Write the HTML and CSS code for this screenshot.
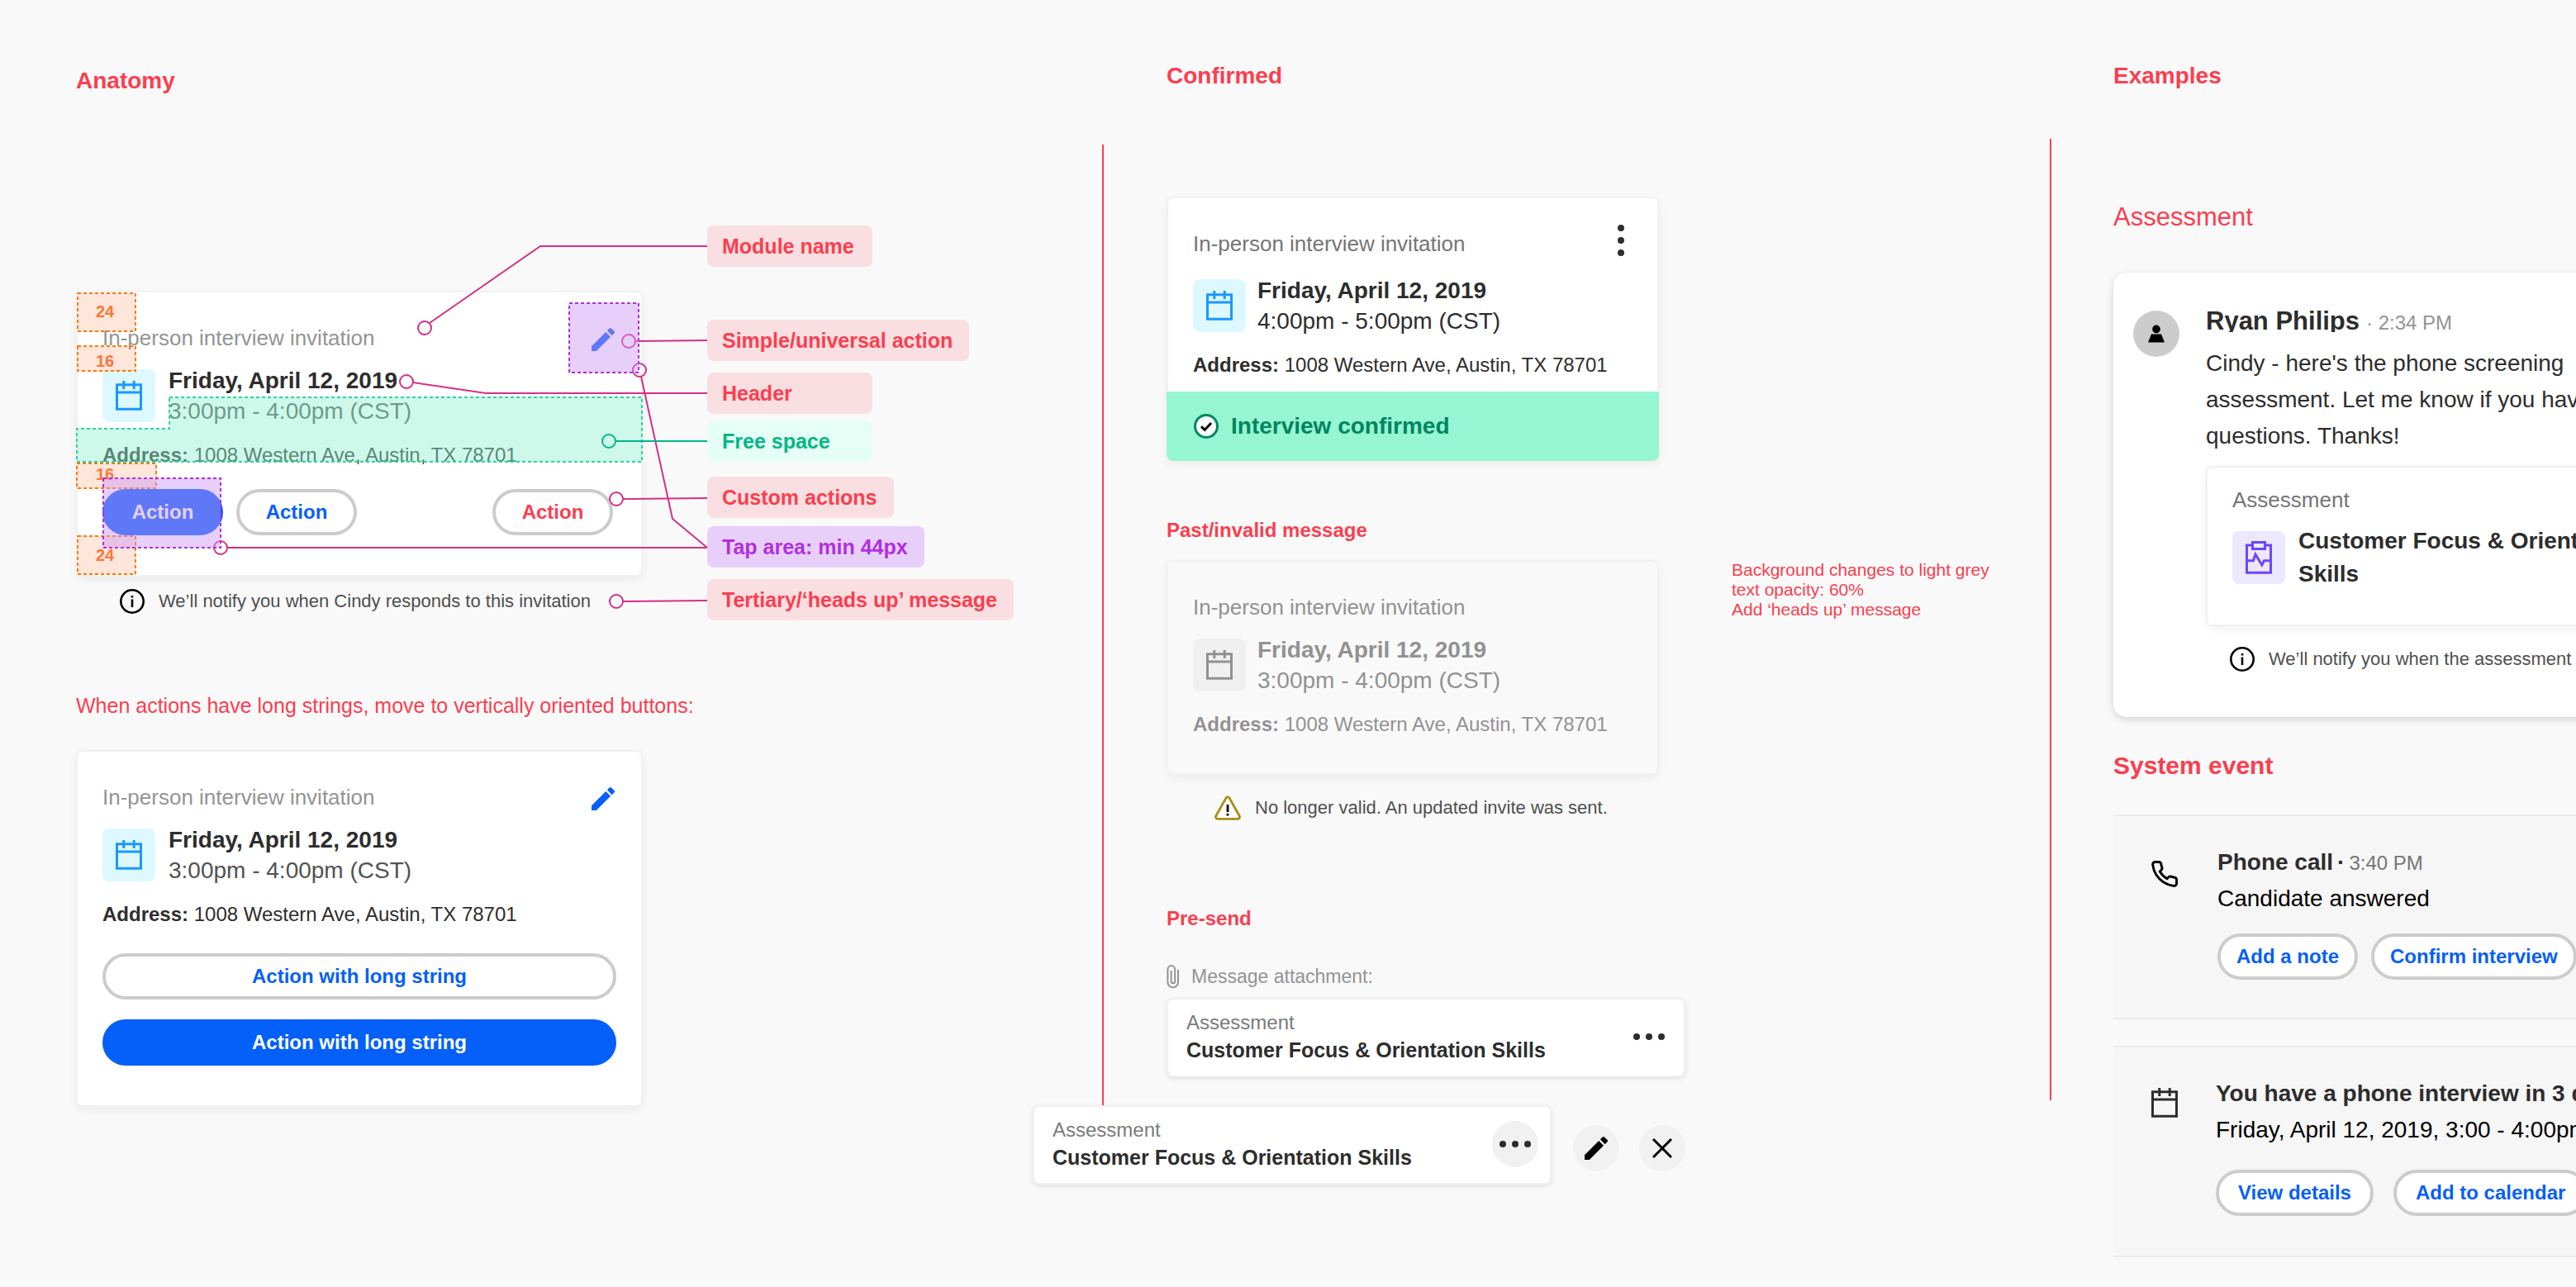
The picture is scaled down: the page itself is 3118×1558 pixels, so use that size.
FILE: index.html
```html
<!DOCTYPE html>
<html lang="en">
<head>
<meta charset="utf-8">
<title>Interview message cards</title>
<link rel="stylesheet" href="styles.css">
</head>
<body>
<svg class="sprite" aria-hidden="true">
  <symbol id="calendar" viewBox="0 0 32 36">
    <path d="M1.5 4.8h29v29.5h-29zM1.5 14h29M9.8 0v10M22.2 0v10" fill="none" stroke="currentColor" stroke-width="3"/>
  </symbol>
  <symbol id="pencil" viewBox="3 3 18 18">
    <path d="M3 17.25V21h3.75L17.81 9.94l-3.75-3.75L3 17.25zM20.71 7.04c.39-.39.39-1.02 0-1.41l-2.34-2.34c-.39-.39-1.02-.39-1.41 0l-1.83 1.83 3.75 3.75 1.83-1.83z" fill="currentColor"/>
  </symbol>
  <symbol id="info" viewBox="0 0 30 30">
    <circle cx="15" cy="15" r="13.7" fill="none" stroke="#000" stroke-width="2.6"/>
    <path d="M15 12.5V22M15 8v2.6" stroke="#000" stroke-width="2.6"/>
  </symbol>
  <symbol id="dots" viewBox="0 0 38 8">
    <circle cx="4" cy="4" r="4"/><circle cx="19" cy="4" r="4"/><circle cx="34" cy="4" r="4"/>
  </symbol>
</svg>
<main class="board">
  <section class="column anatomy">
    <h1 class="heading">Anatomy</h1>
    <div class="stage">
      <div class="stage-main">
        <article class="card">
          <header class="card-head">
            <h2 class="card-name">In-person interview invitation</h2>
            <button class="icon-button" aria-label="Edit"><svg width="28" height="28"><use href="#pencil"/></svg></button>
          </header>
          <div class="event-row">
            <span class="tile"><svg width="32" height="36"><use href="#calendar"/></svg></span>
            <div><p class="date">Friday, April 12, 2019</p><p class="time">3:00pm - 4:00pm (CST)</p></div>
          </div>
          <p class="address"><b>Address:</b> 1008 Western Ave, Austin, TX 78701</p>
          <div class="actions">
            <button class="pill primary">Action</button>
            <button class="pill">Action</button>
            <button class="pill danger">Action</button>
          </div>
        </article>
        <p class="notice"><svg width="30" height="30"><use href="#info"/></svg>We’ll notify you when Cindy responds to this invitation</p>
      </div>
      <ul class="labels">
        <li class="after-64">Module name</li>
        <li class="after-14">Simple/universal action</li>
        <li class="after-8">Header</li>
        <li class="space after-18">Free space</li>
        <li class="after-10">Custom actions</li>
        <li class="tap after-14">Tap area: min 44px</li>
        <li>Tertiary/‘heads up’ message</li>
      </ul>
      <svg class="overlay" width="1140" height="490" viewBox="92 273 1140 490">
        <path class="free" d="M205 481H777V559H93V519H205Z"/>
        <g class="spacing">
          <rect x="94" y="355" width="70" height="46"/><rect x="94" y="419" width="70" height="30"/>
          <rect x="93" y="561" width="96" height="30"/><rect x="94" y="649" width="70" height="46"/>
        </g>
        <g class="measure">
          <text x="127" y="384">24</text><text x="127" y="444">16</text><text x="127" y="581">16</text><text x="127" y="679">24</text>
        </g>
        <g class="leader">
          <circle cx="514" cy="397" r="8"/><path d="M520 391L654 298H856"/>
          <circle cx="761" cy="413" r="8"/><path d="M769 413L856 412"/>
          <circle cx="492" cy="462" r="8"/><path d="M500 463L588 476H856"/>
          <circle cx="774" cy="448" r="8"/><path d="M776 456L814 628L856 663"/>
          <circle cx="267" cy="663" r="8"/><path d="M275 663H856"/>
          <circle cx="746" cy="604" r="8"/><path d="M754 604L856 603"/>
          <circle cx="746" cy="728" r="8"/><path d="M754 728L856 727"/>
        </g>
        <g class="leader green"><circle cx="737" cy="534" r="8"/><path d="M745 534H856"/></g>
        <g class="tap-area"><rect x="125" y="579" width="142" height="84"/><rect x="689" y="367" width="84" height="84"/></g>
      </svg>
    </div>
    <h2 class="remark">When actions have long strings, move to vertically oriented buttons:</h2>
    <article class="card">
      <header class="card-head">
        <h3 class="card-name">In-person interview invitation</h3>
        <button class="icon-button" aria-label="Edit"><svg width="28" height="28"><use href="#pencil"/></svg></button>
      </header>
      <div class="event-row">
        <span class="tile"><svg width="32" height="36"><use href="#calendar"/></svg></span>
        <div><p class="date">Friday, April 12, 2019</p><p class="time">3:00pm - 4:00pm (CST)</p></div>
      </div>
      <p class="address"><b>Address:</b> 1008 Western Ave, Austin, TX 78701</p>
      <div class="actions stacked">
        <button class="pill">Action with long string</button>
        <button class="pill primary">Action with long string</button>
      </div>
    </article>
  </section>

  <div class="divider first"></div>

  <section class="column states">
    <h1 class="heading">Confirmed</h1>
    <article class="card narrow confirmed">
      <header class="card-head">
        <h2 class="card-name">In-person interview invitation</h2>
        <button class="more" aria-label="More options"><svg width="8" height="38" viewBox="0 0 8 38"><circle cx="4" cy="4" r="4"/><circle cx="4" cy="19" r="4"/><circle cx="4" cy="34" r="4"/></svg></button>
      </header>
      <div class="event-row">
        <span class="tile"><svg width="32" height="36"><use href="#calendar"/></svg></span>
        <div><p class="date">Friday, April 12, 2019</p><p class="time">4:00pm - 5:00pm (CST)</p></div>
      </div>
      <p class="address"><b>Address:</b> 1008 Western Ave, Austin, TX 78701</p>
      <p class="status"><svg width="30" height="30" viewBox="0 0 30 30"><circle cx="15" cy="15" r="13.5" fill="#fff" stroke="#00875f" stroke-width="3"/><path d="M9 15.2l4.2 4.2L21 11" fill="none" stroke="#000" stroke-width="3"/></svg>Interview confirmed</p>
    </article>

    <h2 class="subheading">Past/invalid message</h2>
    <div class="past-row">
      <article class="card narrow past">
        <header class="card-head"><h3 class="card-name">In-person interview invitation</h3></header>
        <div class="event-row">
          <span class="tile"><svg width="32" height="36"><use href="#calendar"/></svg></span>
          <div><p class="date">Friday, April 12, 2019</p><p class="time">3:00pm - 4:00pm (CST)</p></div>
        </div>
        <p class="address"><b>Address:</b> 1008 Western Ave, Austin, TX 78701</p>
      </article>
      <p class="side-note">Background changes to light grey<br>text opacity: 60%<br>Add ‘heads up’ message</p>
    </div>
    <p class="notice warning"><svg width="32" height="30" viewBox="0 0 32 30"><path d="M13.9 3.1a2.4 2.4 0 0 1 4.2 0l12.1 21.600a2.400 2.400 0 0 1-2.100 3.600H3.900a2.400 2.400 0 0 1-2.100-3.600z" fill="#fff" stroke="#ab8d17" stroke-width="2.8"/><path d="M16 11v9M16 21.800v2.800" stroke="#000" stroke-width="2.8"/></svg>No longer valid. An updated invite was sent.</p>

    <h2 class="subheading presend">Pre-send</h2>
    <p class="attachment"><svg width="16" height="30" viewBox="0 0 16 30"><path d="M14 7v15a6.3 6.3 0 0 1-12.6 0V6.500a4.400 4.400 0 0 1 8.800 0v14.500a2.300 2.300 0 0 1-4.600 0V8" fill="none" stroke="#949494" stroke-width="2"/></svg>Message attachment:</p>
    <article class="card file">
      <div><p class="file-kind">Assessment</p><h3 class="file-name">Customer Focus &amp; Orientation Skills</h3></div>
      <button class="round plain" aria-label="More options"><svg width="38" height="8"><use href="#dots"/></svg></button>
    </article>
    <div class="file-row">
      <article class="card file">
        <div><p class="file-kind">Assessment</p><h3 class="file-name">Customer Focus &amp; Orientation Skills</h3></div>
        <button class="round" aria-label="More options"><svg width="38" height="8"><use href="#dots"/></svg></button>
      </article>
      <div class="file-tools">
        <button class="round" aria-label="Edit"><svg width="28" height="28"><use href="#pencil"/></svg></button>
        <button class="round" aria-label="Remove"><svg width="24" height="24" viewBox="0 0 24 24"><path d="M1 1l22 22M23 1L1 23" stroke="#000" stroke-width="3"/></svg></button>
      </div>
    </div>
  </section>

  <div class="divider second"></div>

  <section class="column examples">
    <h1 class="heading">Examples</h1>
    <h2 class="group-title">Assessment</h2>
    <article class="message">
      <span class="avatar"><svg width="20" height="22" viewBox="0 0 20 22"><ellipse cx="10" cy="5.500" rx="4.800" ry="5"/><path d="M4 11.500h12l4 10H0z"/></svg></span>
      <div class="message-body">
        <p class="author"><span class="author-name">Ryan Philips</span><span class="stamp">· 2:34 PM</span></p>
        <p class="message-text">Cindy - here's the phone screening assessment. Let me know if you have any questions. Thanks!</p>
        <div class="card attached">
          <h3 class="card-name">Assessment</h3>
          <div class="event-row">
            <span class="tile violet"><svg width="32" height="40" viewBox="0 0 32 40" fill="none" stroke="currentColor" stroke-width="3"><path d="M7 5H1.500v33.200h29V5H25M8.500 1.500h15v8h-15zM3 23.700h6.500L12 16l7.800 13 2.700-5.300H29"/></svg></span>
            <p class="attached-title">Customer Focus &amp; Orientation Skills</p>
          </div>
        </div>
        <p class="notice"><svg width="30" height="30"><use href="#info"/></svg>We’ll notify you when the assessment is completed</p>
      </div>
    </article>
    <h2 class="group-title system">System event</h2>
    <article class="event">
      <svg class="event-icon phone" width="32" height="32" viewBox="1 1 22 22"><path d="M22 16.920v3a2 2 0 0 1-2.180 2 19.790 19.790 0 0 1-8.630-3.070 19.500 19.500 0 0 1-6-6 19.790 19.790 0 0 1-3.070-8.670A2 2 0 0 1 4.110 2h3a2 2 0 0 1 2 1.720 12.840 12.840 0 0 0 .7 2.810 2 2 0 0 1-.45 2.110L8.090 9.910a16 16 0 0 0 6 6l1.270-1.270a2 2 0 0 1 2.110-.45 12.840 12.840 0 0 0 2.810.7A2 2 0 0 1 22 16.920z" fill="none" stroke="#000" stroke-width="2"/></svg>
      <div>
        <h3 class="event-title"><span>Phone call</span><span>·</span><span class="stamp">3:40 PM</span></h3>
        <p class="event-text">Candidate answered</p>
        <div class="event-actions"><button class="pill">Add a note</button><button class="pill">Confirm interview</button></div>
      </div>
    </article>
    <article class="event upcoming">
      <svg class="event-icon" width="32" height="36"><use href="#calendar"/></svg>
      <div>
        <h3 class="event-title">You have a phone interview in 3 days</h3>
        <p class="event-text">Friday, April 12, 2019, 3:00 - 4:00pm</p>
        <div class="event-actions"><button class="pill">View details</button><button class="pill">Add to calendar</button></div>
      </div>
    </article>
  </section>
</main>
</body>
</html>
```

FILE: styles.css
```css
:root {
  --red: #fb3e4f;
  --blue: #055ff9;
  --ink: #2d2d2d;
  --grey: #949494;
  --pink: #d42f87;
}

* { box-sizing: border-box; }

body {
  margin: 0;
  background: #f9f9f9;
  color: var(--ink);
  font-family: "Liberation Sans", Arial, sans-serif;
}

h1, h2, h3, p, ul { margin: 0; padding: 0; font-weight: 400; }
svg { display: block; flex: none; }
.sprite { position: absolute; width: 0; height: 0; }

button {
  display: flex;
  align-items: center;
  justify-content: center;
  margin: 0;
  padding: 0;
  border: 0;
  background: none;
  color: inherit;
  font: inherit;
}

.board {
  display: grid;
  grid-template-columns: 1334fr 2px 1145fr 2px 635fr;
  min-height: 100vh;
  overflow: hidden;
}

.column { min-width: 0; }
.anatomy { padding: 80px 0 0 92px; }
.states { padding: 74px 0 0 76px; }
.examples { padding: 74px 0 36px 75px; }

.divider { background: var(--red); }
.divider.first { margin: 175px 0 220px; }
.divider.second { margin: 168px 0 226px; }

.heading {
  color: var(--red);
  font-size: 28px;
  line-height: 36px;
  font-weight: 700;
}

/* Cards */
.card {
  width: 686px;
  padding: 39px 30px 48px;
  border: 2px solid #f1f1f1;
  border-radius: 8px;
  background: #fff;
  box-shadow: 0 4px 12px rgba(0, 0, 0, .06);
}

.card-head { display: flex; align-items: flex-end; justify-content: space-between; }
.card-name { color: var(--grey); font-size: 26px; line-height: 32px; }
.icon-button { margin-right: 2px; color: var(--blue); }
.event-row { display: flex; align-items: center; gap: 16px; margin-top: 17px; }

.tile {
  display: flex;
  flex: none;
  align-items: center;
  justify-content: center;
  width: 64px;
  height: 64px;
  border-radius: 8px;
  background: #ddf9ff;
  color: #1a98ff;
}
.tile.violet { background: #ece8ff; color: #6b46fe; }

.date, .time { font-size: 28px; line-height: 37px; }
.date { font-weight: 700; }
.time { color: #525252; }
.address { margin-top: 20px; font-size: 24px; line-height: 30px; }

.actions { display: flex; gap: 16px; margin-top: 26px; }
.actions.stacked { flex-direction: column; gap: 24px; margin-top: 32px; }

.pill {
  min-width: 146px;
  height: 56px;
  padding: 0 19px;
  border: 4px solid #ccc;
  border-radius: 28px;
  background: #fff;
  color: var(--blue);
  font-size: 24px;
  font-weight: 700;
  white-space: nowrap;
}
.pill.primary { border-color: var(--blue); background: var(--blue); color: #fff; }
.pill.danger { margin: 0 4px 0 auto; color: var(--red); }

.notice {
  display: flex;
  align-items: center;
  gap: 17px;
  margin-top: 15px;
  padding-left: 53px;
  color: #4f4f4f;
  font-size: 22px;
  line-height: 30px;
  white-space: nowrap;
}

/* Annotated card */
.stage { position: relative; display: flex; gap: 78px; margin-top: 157px; }
.stage-main { padding-top: 79px; }
.labels { display: flex; flex-direction: column; align-items: flex-start; list-style: none; }
.labels li {
  min-width: 200px;
  padding: 0 20px 0 18px;
  border-radius: 8px;
  background: #f9dfe1;
  color: var(--red);
  font-size: 25px;
  line-height: 50px;
  font-weight: 700;
  white-space: nowrap;
}
.labels .space { background: #e5fff6; color: #00b886; }
.labels .tap { background: #e7cffa; color: #b12fe0; }
.labels .after-8 { margin-bottom: 8px; }
.labels .after-10 { margin-bottom: 10px; }
.labels .after-14 { margin-bottom: 14px; }
.labels .after-18 { margin-bottom: 18px; }
.labels .after-64 { margin-bottom: 64px; }

.overlay { position: absolute; top: 0; left: 0; pointer-events: none; }
.free { fill: rgba(147, 242, 209, .45); stroke: #2cd3a0; stroke-width: 2; stroke-dasharray: 4 3; }
.spacing { fill: rgba(255, 116, 57, .18); stroke: #ff7800; stroke-width: 2; stroke-dasharray: 4 3; }
.measure { fill: #ff7439; font-size: 20px; font-weight: 700; text-anchor: middle; }
.leader { fill: none; stroke: var(--pink); stroke-width: 2; }
.leader.green { stroke: #00b886; }
.tap-area { fill: rgba(203, 151, 244, .46); stroke: #b12fe0; stroke-width: 2; stroke-dasharray: 4 3; }

.remark {
  margin: 88px 0 39px;
  color: var(--red);
  font-size: 25px;
  line-height: 30px;
}

/* States */
.narrow { width: 596px; }
.narrow .event-row { gap: 14px; }
.confirmed { margin-top: 128px; padding-bottom: 0; }
.confirmed .card-head { align-items: flex-start; }
.confirmed .card-name { color: #757575; }
.confirmed .event-row { margin-top: 22px; }
.confirmed .time { color: var(--ink); }
.more { width: 28px; height: 24px; fill: var(--ink); }

.status {
  display: flex;
  align-items: center;
  gap: 15px;
  height: 84px;
  margin: 17px -32px -2px;
  padding-left: 33px;
  border-radius: 0 0 8px 8px;
  background: #96f5d3;
  color: #00865f;
  font-size: 28px;
  font-weight: 700;
}

.subheading {
  margin-top: 69px;
  color: var(--red);
  font-size: 24px;
  line-height: 30px;
  font-weight: 700;
}

.past-row { display: flex; gap: 88px; margin-top: 21px; }
.past { flex: none; padding-bottom: 44px; background: #f9f9f9; }
.past .card-name, .past .date, .past .time, .past .address { color: #929292; }
.past .tile { background: #f0f0f0; color: #919191; }
.side-note { color: var(--red); font-size: 21px; line-height: 24px; white-space: nowrap; }
.notice.warning { margin-top: 25px; padding-left: 58px; }

.presend { margin-top: 104px; }
.attachment {
  display: flex;
  align-items: center;
  gap: 14px;
  margin-top: 40px;
  color: var(--grey);
  font-size: 23px;
  line-height: 30px;
}

.file {
  display: flex;
  align-items: center;
  justify-content: space-between;
  width: 628px;
  margin-top: 11px;
  padding: 12px 14px 14px 22px;
  box-shadow: 0 2px 6px rgba(0, 0, 0, .1);
}
.file-kind { color: #7a7a7a; font-size: 24px; line-height: 32px; }
.file-name { font-size: 25px; line-height: 34px; font-weight: 700; }
.round { width: 56px; height: 56px; border-radius: 50%; background: #f1f1f1; color: #000; }
.file .round { fill: var(--ink); }
.round.plain { background: none; }

.file-row { position: relative; display: flex; gap: 26px; margin: 34px 0 0 -162px; }
.file-row .file { margin-top: 0; }
.file-tools { display: flex; align-items: flex-end; gap: 24px; padding-bottom: 16px; }

/* Examples */
.group-title { margin-top: 135px; color: var(--red); font-size: 31px; line-height: 36px; }
.group-title.system { margin-top: 41px; font-size: 30px; font-weight: 700; }

.message {
  display: flex;
  gap: 32px;
  width: 712px;
  margin-top: 49px;
  padding: 41px 40px 55px 24px;
  border-radius: 16px;
  background: #fff;
  box-shadow: 0 3px 10px rgba(0, 0, 0, .16);
}

.avatar {
  display: flex;
  flex: none;
  align-items: center;
  justify-content: center;
  width: 56px;
  height: 56px;
  margin-top: 5px;
  border-radius: 50%;
  background: #ccc;
}

.message-body { width: 560px; }
.author { display: flex; align-items: baseline; gap: 8px; height: 36px; line-height: 36px; white-space: nowrap; }
.author-name { font-size: 31px; font-weight: 700; clip-path: inset(0 0 5px 0); }
.stamp { color: var(--grey); font-size: 24px; font-weight: 400; }
.message-text { margin-top: 11px; font-size: 28px; line-height: 44px; }

.attached { width: auto; margin-top: 14px; padding: 23px 30px 41px; }
.attached .card-name { color: #757575; }
.attached .event-row { margin-top: 14px; }
.attached-title { font-size: 28px; line-height: 40px; font-weight: 700; }
.message .notice { margin-top: 25px; padding-left: 29px; }

.event {
  display: flex;
  gap: 48px;
  width: 712px;
  margin-top: 41px;
  padding: 34px 40px 46px 46px;
  border: solid #ebebeb;
  border-width: 2px 0;
  background: #f6f6f6;
}
.event-icon { margin-top: 15px; }
.event-icon.phone { margin-top: 20px; }
.event-title, .event-text { font-size: 28px; line-height: 44px; white-space: nowrap; }
.event-title { display: flex; align-items: baseline; gap: 5px; height: 44px; font-weight: 700; }
.event-title .stamp { color: #757575; }
.event-text { color: #000; }
.event-actions { display: flex; gap: 16px; margin-top: 20px; }

.event.upcoming { gap: 46px; margin-top: 32px; padding-bottom: 48px; }
.upcoming .event-actions { gap: 24px; margin-top: 26px; }
.upcoming .pill { padding: 0 23px; }
```
